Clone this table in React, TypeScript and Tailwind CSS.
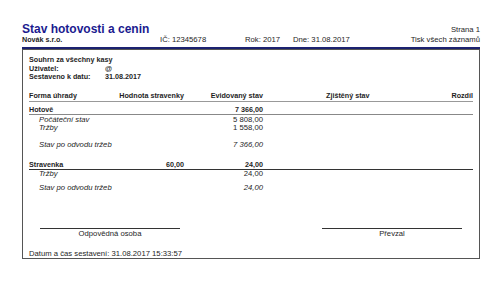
import React from 'react';

// Řádky sestavy
interface Row {
  label: string;
  voucher?: string;
  value: string;
  italic?: boolean;
  valueItalic?: boolean;
}

const Cell = ({ children, className = '' }: { children?: React.ReactNode; className?: string }) => (
  <div className={`whitespace-nowrap ${className}`}>{children}</div>
);

const GroupHeader = ({ label, voucher, value, line }: { label: string; voucher?: string; value: string; line: string }) => (
  <div className={`grid grid-cols-[89px_66px_79px_1fr_60px] h-[9px] leading-[8px] text-[7.2px] font-bold border-b ${line}`}>
    <Cell>{label}</Cell>
    <Cell className="text-right">{voucher}</Cell>
    <Cell className="text-right">{value}</Cell>
    <Cell />
    <Cell />
  </div>
);

const SubRow = ({ row, className = '' }: { row: Row; className?: string }) => (
  <div className={`grid grid-cols-[89px_66px_79px_1fr_60px] leading-[8px] text-[7.7px] ${className}`}>
    <Cell className="pl-[10px] italic">{row.label}</Cell>
    <Cell />
    <Cell className={`text-right ${row.valueItalic ? 'italic' : ''}`}>{row.value}</Cell>
    <Cell />
    <Cell />
  </div>
);

export default function App() {
  return (
    <div className="w-[500px] h-[287px] bg-white text-[#1e1e1e] font-['Liberation_Sans',Arial,sans-serif] overflow-hidden">
      <div className="pl-[22px] pr-[20px] pt-[23px]">
        {/* Hlavička */}
        <div className="flex justify-between items-end">
          <h1 className="text-[12px] leading-[12px] font-bold text-[#1b1b8f]">Stav hotovosti a cenin</h1>
          <span className="text-[7.7px] leading-[8px] mb-[1px]">Strana 1</span>
        </div>
        <div className="flex items-end mt-[1px] h-[8px] leading-[8px]">
          <span className="w-[138px] text-[7.2px] font-bold">Novák s.r.o.</span>
          <span className="w-[85px] text-[7.7px]">IČ: 12345678</span>
          <span className="w-[48px] text-[7.7px]">Rok: 2017</span>
          <span className="flex-1 text-[7.7px]">Dne: 31.08.2017</span>
          <span className="text-[7.7px]">Tisk všech záznamů</span>
        </div>
        <div className="mt-[3px] h-[2px] bg-[#1c2270]" />

        {/* Tělo sestavy */}
        <div className="border border-[#555] h-[210px] px-[6px] pt-[6px]">
          <div className="text-[7.2px] leading-[8.5px] font-bold">
            <div>Souhrn za všechny kasy</div>
            <div className="flex">
              <span className="w-[76px]">Uživatel:</span>
              <span>@</span>
            </div>
            <div className="flex">
              <span className="w-[76px]">Sestaveno k datu:</span>
              <span>31.08.2017</span>
            </div>
          </div>

          <div className="mt-[10.5px] grid grid-cols-[89px_66px_79px_1fr_60px] text-[7.2px] leading-[8px] font-bold pb-[1px] border-b border-[#999]">
            <Cell>Forma úhrady</Cell>
            <Cell className="text-right">Hodnota stravenky</Cell>
            <Cell className="text-right">Evidovaný stav</Cell>
            <Cell className="pl-[63px]">Zjištěný stav</Cell>
            <Cell className="text-right">Rozdíl</Cell>
          </div>

          <div className="mt-[4px]">
            <GroupHeader label="Hotově" value="7 366,00" line="border-[#888]" />
            <SubRow row={{ label: 'Počáteční stav', value: '5 808,00' }} className="mt-[1px]" />
            <SubRow row={{ label: 'Tržby', value: '1 558,00' }} />
            <SubRow row={{ label: 'Stav po odvodu tržeb', value: '7 366,00', valueItalic: true }} className="mt-[9px]" />
          </div>

          <div className="mt-[12px]">
            <GroupHeader label="Stravenka" voucher="60,00" value="24,00" line="border-[#333]" />
            <SubRow row={{ label: 'Tržby', value: '24,00' }} />
            <SubRow row={{ label: 'Stav po odvodu tržeb', value: '24,00', valueItalic: true }} className="mt-[6px]" />
          </div>

          {/* Podpisy */}
          <div className="mt-[36px] flex justify-between px-[11px] text-[7.7px] leading-[8px]">
            <div className="w-[140px] border-t border-[#333] pt-[1px] text-center">Odpovědná osoba</div>
            <div className="w-[140px] border-t border-[#333] pt-[1px] text-center">Převzal</div>
          </div>

          <div className="mt-[12px] text-[7.7px] leading-[8px]">Datum a čas sestavení: 31.08.2017 15:33:57</div>
        </div>
      </div>
    </div>
  );
}
